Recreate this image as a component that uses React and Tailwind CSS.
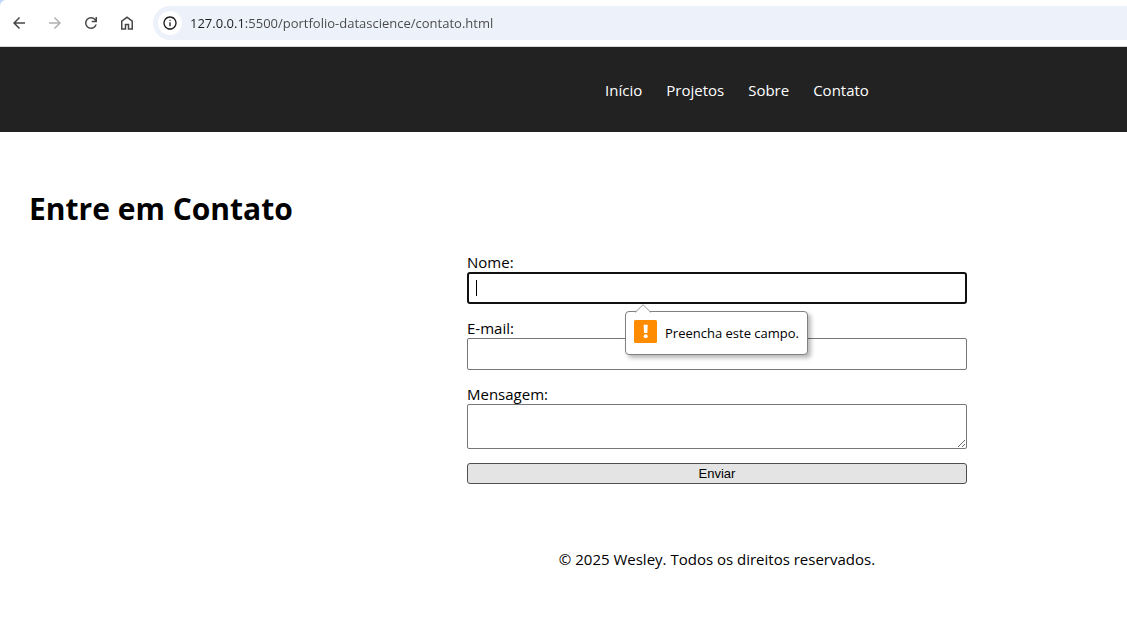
import React from "react";

const iconButton =
  "flex size-6 items-center justify-center rounded-full text-[#474747] disabled:text-[#b0b0b0]";

function MaterialIcon({ path, className = "size-5" }) {
  return (
    <svg viewBox="0 -960 960 960" fill="currentColor" className={className} aria-hidden="true">
      <path d={path} />
    </svg>
  );
}

const icons = {
  back: "m313-440 224 224-57 56-320-320 320-320 57 56-224 224h487v80H313Z",
  forward: "M647-440H160v-80h487L423-744l57-56 320 320-320 320-57-56 224-224Z",
  reload:
    "M480-160q-134 0-227-93t-93-227q0-134 93-227t227-93q69 0 132 28.500T720-690v-110h80v280H520v-80h168q-32-56-87.500-88T480-720q-100 0-170 70t-70 170q0 100 70 170t170 70q77 0 139-44t87-116h84q-28 106-114 173t-196 67Z",
  home: "M240-200h120v-240h240v240h120v-360L480-740 240-560v360Zm-80 80v-480l320-240 320 240v480H520v-240h-80v240H160Z",
  info: "M440-280h80v-240h-80v240Zm40-320q17 0 28.500-11.500T520-640q0-17-11.500-28.500T480-680q-17 0-28.500 11.500T440-640q0 17 11.500 28.500T480-600Zm0 520q-83 0-156-31.500T197-197q-54-54-85.500-127T80-480q0-83 31.500-156T197-763q54-54 127-85.500T480-880q83 0 156 31.500T763-763q54 54 85.500 127T880-480q0 83-31.500 156T763-197q-54 54-127 85.500T480-80Zm0-80q134 0 227-93t93-227q0-134-93-227t-227-93q-134 0-227 93t-93 227q0 134 93 227t227 93Z",
};

function BrowserBar() {
  return (
    <div className="bg-[#c2d7fb]">
      <div className="flex h-[47px] items-center rounded-tl-md border-b border-[#d5d7da] bg-white pl-[7px]">
        <div className="flex gap-3">
          <button type="button" aria-label="Voltar" className={iconButton}>
            <MaterialIcon path={icons.back} className="size-[18px]" />
          </button>
          <button type="button" aria-label="Avançar" disabled className={iconButton}>
            <MaterialIcon path={icons.forward} className="size-[18px]" />
          </button>
          <button type="button" aria-label="Recarregar" className={iconButton}>
            <MaterialIcon path={icons.reload} className="size-[18px]" />
          </button>
          <button type="button" aria-label="Página inicial" className={iconButton}>
            <MaterialIcon path={icons.home} className="size-[18px]" />
          </button>
        </div>
        <div className="ml-[14px] flex h-[34px] flex-1 items-center gap-2 rounded-l-full bg-[#edf1fa] pl-[5px]">
          <button
            type="button"
            aria-label="Ver informações do site"
            className="flex size-6 shrink-0 items-center justify-center rounded-full bg-white text-[#1f1f1f]"
          >
            <MaterialIcon path={icons.info} className="size-4" />
          </button>
          <input
            type="text"
            aria-label="Endereço"
            defaultValue="127.0.0.1:5500/portfolio-datascience/contato.html"
            className="min-w-0 flex-1 bg-linear-[90deg,#1f1f1f_54px,#474747_54px] bg-clip-text text-[13px] leading-5 text-transparent outline-none"
          />
        </div>
      </div>
    </div>
  );
}

function ValidationBubble({ children }) {
  return (
    <div
      role="alert"
      className="absolute top-full left-[158px] z-10 mt-[7px] flex h-11 items-start gap-2 rounded border border-[#808080] bg-white p-2 text-[13px] leading-[26px] whitespace-nowrap shadow-[3px_3px_4px_rgba(0,0,0,0.28)]"
    >
      <svg className="absolute -top-2 left-[9px] h-[9px] w-4" viewBox="0 0 16 9" aria-hidden="true">
        <path d="M0 9 8 .7 16 9Z" fill="#fff" />
        <path d="M0 8.500 8 .7l8 7.800" fill="none" stroke="#9a9a9a" />
      </svg>
      <svg className="size-[23px] shrink-0" viewBox="0 0 23 23" aria-hidden="true">
        <rect width="23" height="23" rx="1.500" fill="#ff8c00" />
        <path d="M9.700 4.800h4l-.3 8.200H10z" fill="#fff" />
        <circle cx="11.700" cy="16.300" r="2" fill="#fff" />
      </svg>
      <span>{children}</span>
    </div>
  );
}

const fieldBorder = "block w-full rounded-xs border border-[#767676] bg-white outline-none";

function ContactForm() {
  return (
    <form noValidate className="flex w-full max-w-[500px] flex-col gap-[14px]">
      <div>
        <label htmlFor="nome" className="block leading-5">
          Nome:
        </label>
        <div className="relative">
          <input
            id="nome"
            name="nome"
            type="text"
            required
            className="block h-8 w-full rounded-[3px] border-2 border-[#101010] bg-white px-2 text-[13px] caret-transparent outline-none"
          />
          <span className="absolute top-2 left-[9px] h-4 w-px bg-black" aria-hidden="true" />
          <ValidationBubble>Preencha este campo.</ValidationBubble>
        </div>
      </div>
      <div>
        <label htmlFor="email" className="block leading-5">
          E-mail:
        </label>
        <input id="email" name="email" type="email" required className={`${fieldBorder} h-8 px-2 text-[13px]`} />
      </div>
      <div>
        <label htmlFor="mensagem" className="block leading-5">
          Mensagem:
        </label>
        <textarea
          id="mensagem"
          name="mensagem"
          required
          className={`${fieldBorder} h-[45px] resize px-2 py-1 text-[13px]`}
        />
      </div>
      <button
        type="submit"
        className="h-[21px] rounded-[3px] border border-[#4f4f4f] bg-[#e4e4e4] font-['Liberation_Sans',sans-serif] text-[13px] leading-4"
      >
        Enviar
      </button>
    </form>
  );
}

const links = ["Início", "Projetos", "Sobre", "Contato"];

export default function App() {
  return (
    <div className="min-h-screen bg-white font-['Open_Sans','Noto_Sans',sans-serif] text-[15px] text-black">
      <BrowserBar />
      <header className="bg-[#222222] pt-[33px] pb-8 pl-[347px]">
        <nav>
          <ul className="flex justify-center gap-6 leading-5 text-white">
            {links.map((name) => (
              <li key={name}>
                <a href={`#${name.toLowerCase()}`}>{name}</a>
              </li>
            ))}
          </ul>
        </nav>
      </header>
      <main className="pt-14">
        <h1 className="pl-[29px] text-[30px] leading-[42px] font-bold">Entre em Contato</h1>
        <div className="flex justify-center pt-[22px] pl-[307px]">
          <ContactForm />
        </div>
      </main>
      <footer className="pt-[65px] pb-8 pl-[307px] text-center leading-5">
        <p>© 2025 Wesley. Todos os direitos reservados.</p>
      </footer>
    </div>
  );
}
